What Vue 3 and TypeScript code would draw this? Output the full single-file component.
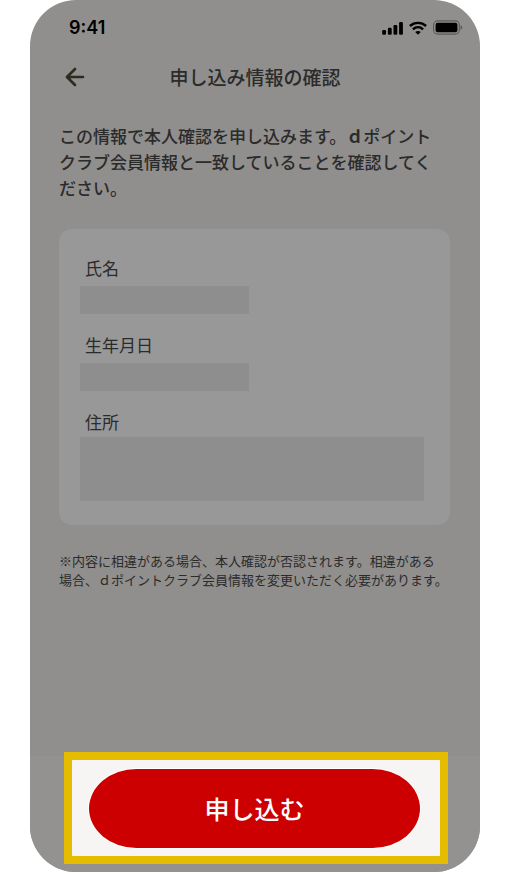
<script setup lang="ts">
interface Field {
  id: string
  label: string
  multiline?: boolean
}

const fields: Field[] = [
  { id: 'name', label: '氏名' },
  { id: 'birthday', label: '生年月日' },
  { id: 'address', label: '住所', multiline: true },
]
</script>

<template>
  <div class="phone">
    <div class="status">
      <span class="time">9:41</span>
      <div class="indicators">
        <svg class="signal" width="21" height="14" viewBox="0 0 21 14" aria-hidden="true">
          <rect x="0.2" y="9" width="3.8" height="4.8" rx="1.2" />
          <rect x="5.9" y="6.8" width="3.8" height="7" rx="1.2" />
          <rect x="11.5" y="4" width="3.8" height="9.8" rx="1.2" />
          <rect x="17.1" y="1" width="3.8" height="12.8" rx="1.2" />
        </svg>
        <svg class="wifi" width="18" height="14" viewBox="0 0 18 14" aria-hidden="true">
          <path d="M0.9 5C5.4.8 12.6.8 17.1 5" />
          <path d="M3.9 8.3C6.9 5.6 11.1 5.6 14.1 8.3" />
          <path class="solid" d="M6.2 11Q9 8.9 11.8 11L9 13.8Z" />
        </svg>
        <svg class="battery" width="30" height="15" viewBox="0 0 30 15" aria-hidden="true">
          <rect class="shell" x="0.6" y="0.9" width="25.8" height="13.2" rx="4" />
          <rect x="2.6" y="2.8" width="21.8" height="9.4" rx="2" />
          <path class="cap" d="M27.6 5.2Q29.2 5.8 29.2 7.5T27.6 9.8Z" />
        </svg>
      </div>
    </div>

    <header class="bar">
      <button class="back" type="button" aria-label="戻る">
        <svg width="20" height="20" viewBox="0 0 20 20" aria-hidden="true">
          <path d="M10 2L2 10L10 18M2.4 10H18" />
        </svg>
      </button>
      <h1>申し込み情報の確認</h1>
    </header>

    <main>
      <p class="intro">この情報で本人確認を申し込みます。<b>&#xFF44;</b>ポイント<br />クラブ会員情報と一致していることを確認してく<br />ださい。</p>
      <dl class="card">
        <div v-for="field in fields" :key="field.id" class="field" :class="{ multiline: field.multiline }">
          <dt>{{ field.label }}</dt>
          <dd></dd>
        </div>
      </dl>
      <p class="note">※内容に相違がある場合、本人確認が否認されます。相違がある<br />場合、&#xFF44;ポイントクラブ会員情報を変更いただく必要があります。</p>
    </main>

    <footer>
      <div class="highlight">
        <button class="apply" type="button">申し込む</button>
      </div>
    </footer>
  </div>
</template>

<style>
body {
  margin: 0;
  background: #fff;
}
</style>

<style scoped>
.phone {
  display: flex;
  flex-direction: column;
  box-sizing: border-box;
  min-height: 100vh;
  margin: 0 30px;
  overflow: hidden;
  border-radius: 46px;
  background: #908f8d;
  color: #2b2b2b;
  font-family: "Noto Sans CJK JP", sans-serif;
}

.status {
  display: flex;
  align-items: center;
  justify-content: space-between;
  height: 55px;
  padding: 0 17px 0 39px;
}

.time {
  color: #000;
  font: 600 18px/24px Inter, sans-serif;
}

.indicators {
  display: flex;
  align-items: center;
  gap: 6px;
}

.wifi path {
  fill: none;
  stroke: #000;
  stroke-width: 2.4;
}

.wifi .solid {
  fill: #000;
  stroke: none;
}

.battery .shell {
  fill: none;
  stroke: #5c5b5a;
  stroke-width: 1.1;
}

.battery .cap {
  fill: #5c5b5a;
}

.bar {
  display: grid;
  grid-template-columns: 20px 1fr 20px;
  align-items: center;
  height: 44px;
  padding: 0 35px;
}

.back {
  display: flex;
  padding: 0;
  border: 0;
  background: none;
}

.back path {
  fill: none;
  stroke: #2e2b20;
  stroke-width: 2.7;
  stroke-linecap: round;
  stroke-linejoin: round;
}

h1 {
  margin: 0;
  text-align: center;
  white-space: nowrap;
  font-size: 19px;
  font-weight: 500;
  line-height: 28px;
}

main {
  flex: 1;
  padding: 24px 30px 24px 29px;
}

p,
dl,
dd {
  margin: 0;
}

.intro {
  white-space: nowrap;
  font-size: 17px;
  font-weight: 500;
  line-height: 26px;
}

.card {
  display: flex;
  flex-direction: column;
  gap: 19px;
  margin: 28px 0 26px;
  padding: 27px 26px 24px 21px;
  border-radius: 13px;
  background: #989898;
}

.field {
  display: flex;
  flex-direction: column;
  gap: 6px;
}

.field dt {
  padding-left: 5px;
  font-size: 17px;
  line-height: 24px;
}

.field dd {
  width: 49%;
  height: 28px;
  background: #8e8e8e;
}

.multiline {
  gap: 3px;
}

.multiline dd {
  width: 100%;
  height: 64px;
}

.note {
  white-space: nowrap;
  font-size: 13px;
  line-height: 19px;
}

footer {
  padding: 0 32px 8px 34px;
  background: #949290;
}

.highlight {
  margin-top: -4px;
  padding: 9px 20px 8px 17px;
  border: 8px solid #e5bc00;
  background: #f6f5f3;
}

.apply {
  display: block;
  width: 100%;
  height: 79px;
  padding: 0 0 2px;
  border: 0;
  border-radius: 48px / 40px;
  background: #c00;
  box-shadow: 0 0 0 1px #fff;
  color: #fff;
  font-family: inherit;
  font-size: 25px;
  font-weight: 500;
  line-height: 36px;
}
</style>
